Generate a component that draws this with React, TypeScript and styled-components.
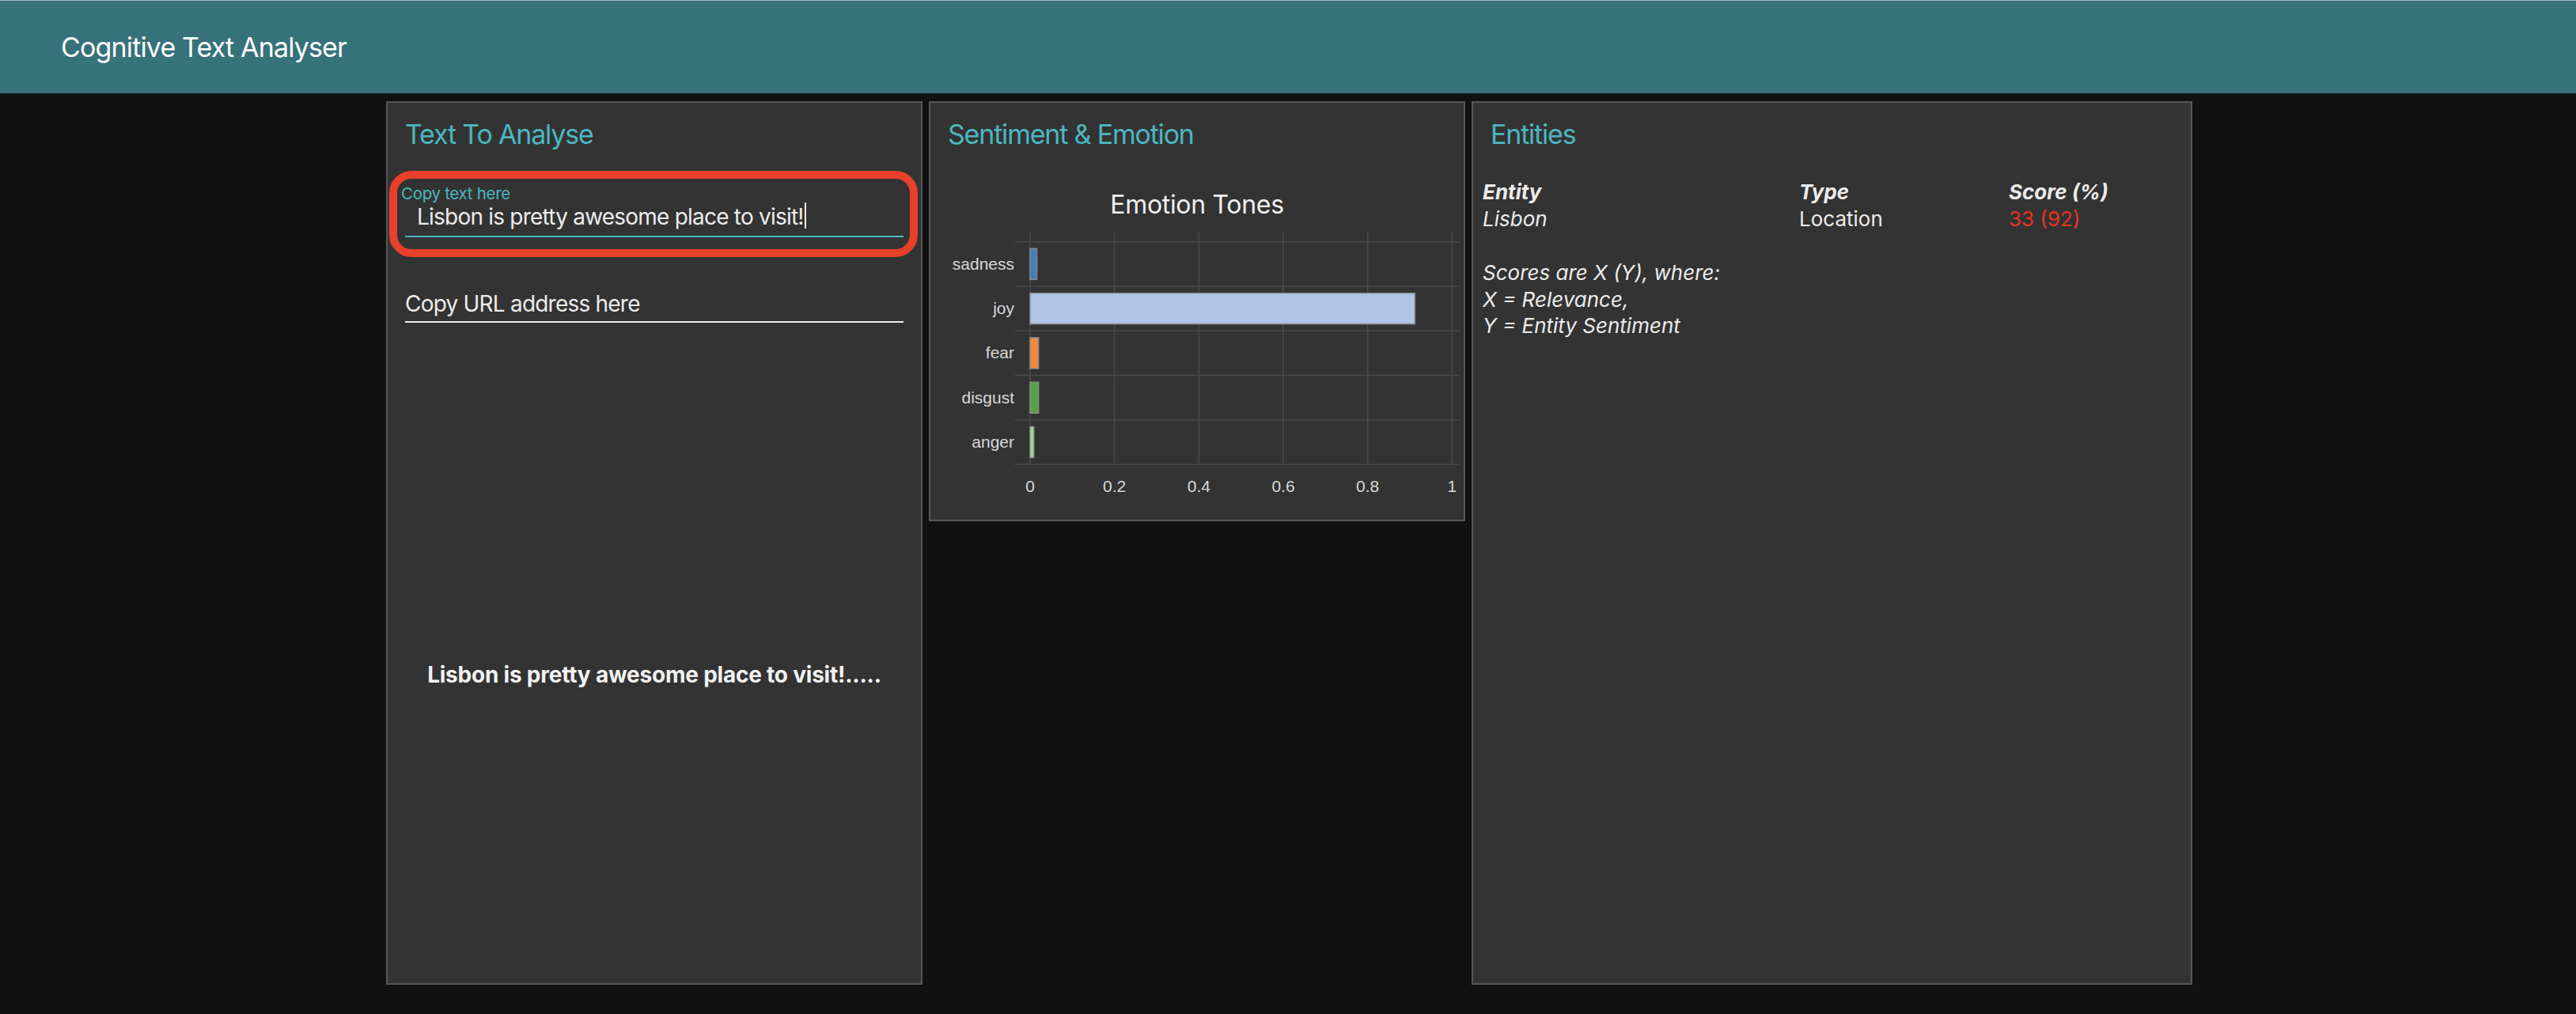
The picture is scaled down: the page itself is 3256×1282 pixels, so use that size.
import React from "react";
import styled, { createGlobalStyle } from "styled-components";

const GlobalStyle = createGlobalStyle`
  html, body {
    margin: 0;
    padding: 0;
    background: #111111;
  }
  body {
    font-family: Inter, "Noto Sans", "Liberation Sans", sans-serif;
    color: #e9e9e9;
  }
  * {
    box-sizing: border-box;
  }
`;

const TEAL = "#4cb7c0";

const Header = styled.header`
  height: 118px;
  background: #367279;
  border-top: 1px solid #a3b7c9;
  display: flex;
  align-items: center;
  padding-left: 77px;
`;

const AppTitle = styled.h1`
  margin: 0;
  font-size: 34px;
  line-height: 40px;
  font-weight: 400;
  color: #ffffff;
  letter-spacing: -0.025em;
`;

const Dashboard = styled.main`
  display: grid;
  grid-template-columns: 678px 678px 911px;
  column-gap: 8px;
  justify-content: center;
  align-items: start;
  padding: 10px 0 0 3px;
`;

const Panel = styled.section<{ $height: number }>`
  height: ${(p) => p.$height}px;
  background: #333333;
  border: 2px solid #575757;
  padding: 20px 22px;
  display: flex;
  flex-direction: column;
`;

const PanelTitle = styled.h2`
  margin: 0;
  font-size: 34px;
  line-height: 40px;
  font-weight: 400;
  color: ${TEAL};
  letter-spacing: -0.035em;
`;

const Field = styled.div<{ $gap: number }>`
  position: relative;
  margin-top: ${(p) => p.$gap}px;
`;

const FloatingLabel = styled.div`
  font-size: 20.5px;
  line-height: 22px;
  height: 22px;
  color: ${TEAL};
  margin-left: -5px;
  letter-spacing: -0.015em;
`;

const InputLine = styled.div<{ $focused?: boolean; $indent?: number; $padBottom: number }>`
  font-size: 28px;
  line-height: 32px;
  letter-spacing: -0.028em;
  color: #ececec;
  padding: 0 0 ${(p) => p.$padBottom}px ${(p) => p.$indent ?? 0}px;
  border-bottom: 2px solid ${(p) => (p.$focused ? TEAL : "#eeeeee")};
  white-space: nowrap;
`;

const Caret = styled.span`
  display: inline-block;
  width: 2px;
  height: 33px;
  margin-left: 1px;
  background: #e9e9e9;
  vertical-align: -5px;
`;

const Highlight = styled.div`
  position: absolute;
  top: -18px;
  left: -20px;
  right: -18px;
  bottom: -25px;
  border: 10px solid #e8402a;
  border-radius: 28px;
  pointer-events: none;
`;

const ResultText = styled.p`
  margin: 429px 0 0;
  text-align: center;
  font-size: 28px;
  line-height: 32px;
  font-weight: 700;
  letter-spacing: -0.008em;
  color: #f2f2f2;
`;

const ChartTitle = styled.h3`
  margin: 50px 0 0;
  text-align: center;
  font-size: 32px;
  line-height: 38px;
  font-weight: 400;
  color: #f0f0f0;
  letter-spacing: -0.01em;
`;

const ChartSvg = styled.svg`
  display: block;
  flex: none;
  margin-top: 12px;
  overflow: visible;
`;

const EntityTable = styled.div`
  display: grid;
  grid-template-columns: 400px 265px 1fr;
  margin: 36px 0 0 -10px;
  font-size: 26px;
  line-height: 34px;
`;

const Cell = styled.div<{ $bold?: boolean; $italic?: boolean; $color?: string }>`
  font-weight: ${(p) => (p.$bold ? 700 : 400)};
  font-style: ${(p) => (p.$italic ? "italic" : "normal")};
  color: ${(p) => p.$color ?? "#ececec"};
`;

const Note = styled.div`
  margin: 34px 0 0 -10px;
  font-size: 26px;
  line-height: 33.5px;
  font-style: italic;
  color: #ececec;
`;

const emotions = [
  { label: "sadness", value: 0.016, color: "#3d7fbf" },
  { label: "joy", value: 0.912, color: "#b0c6e6" },
  { label: "fear", value: 0.02, color: "#ee8a3a" },
  { label: "disgust", value: 0.02, color: "#55a346" },
  { label: "anger", value: 0.009, color: "#a5db8c" },
];

const ticks = [0, 0.2, 0.4, 0.6, 0.8, 1];

const X0 = 104;
const SCALE = 533.3;
const TOP = 15.7;
const BAND = 56.3;
const BAR_H = 39;
const GRID = "#4b4b4b";
const LABEL = "#d9d9d9";

function EmotionChart() {
  return (
    <ChartSvg width={650} height={340} viewBox="0 0 650 340">
      {ticks.map((t) => (
        <line
          key={`v${t}`}
          x1={X0 + t * SCALE}
          x2={X0 + t * SCALE}
          y1={4}
          y2={298}
          stroke={GRID}
          strokeWidth={1.5}
        />
      ))}
      {[0, 1, 2, 3, 4, 5].map((i) => (
        <line
          key={`h${i}`}
          x1={85}
          x2={646}
          y1={TOP + i * BAND}
          y2={TOP + i * BAND}
          stroke={GRID}
          strokeWidth={1.5}
        />
      ))}
      {emotions.map((e, i) => (
        <rect
          key={e.label}
          x={X0}
          y={TOP + i * BAND + (BAND - BAR_H) / 2}
          width={Math.max(e.value * SCALE, 3)}
          height={BAR_H}
          fill={e.color}
          stroke="#8a8a8a"
          strokeWidth={1.5}
        />
      ))}
      {emotions.map((e, i) => (
        <text
          key={`l${e.label}`}
          x={84}
          y={TOP + BAND * (i + 0.5) + 7}
          textAnchor="end"
          fontFamily='"Liberation Sans", Arial, sans-serif'
          fontSize={21}
          fill={LABEL}
        >
          {e.label}
        </text>
      ))}
      {ticks.map((t) => (
        <text
          key={`t${t}`}
          x={X0 + t * SCALE}
          y={331.7}
          textAnchor="middle"
          fontFamily='"Liberation Sans", Arial, sans-serif'
          fontSize={21}
          fill={LABEL}
        >
          {t}
        </text>
      ))}
    </ChartSvg>
  );
}

export default function App() {
  const text = "Lisbon is pretty awesome place to visit!";
  return (
    <>
      <GlobalStyle />
      <Header>
        <AppTitle>Cognitive Text Analyser</AppTitle>
      </Header>
      <Dashboard>
        <Panel $height={1117}>
          <PanelTitle>Text To Analyse</PanelTitle>
          <Field $gap={44}>
            <FloatingLabel>Copy text here</FloatingLabel>
            <InputLine $focused $indent={15} $padBottom={8}>
              {text}
              <Caret />
            </InputLine>
            <Highlight />
          </Field>
          <Field $gap={68}>
            <InputLine $padBottom={6}>Copy URL address here</InputLine>
          </Field>
          <ResultText>{text}.....</ResultText>
        </Panel>
        <Panel $height={531}>
          <PanelTitle>Sentiment &amp; Emotion</PanelTitle>
          <ChartTitle>Emotion Tones</ChartTitle>
          <EmotionChart />
        </Panel>
        <Panel $height={1117}>
          <PanelTitle>Entities</PanelTitle>
          <EntityTable>
            <Cell $bold $italic>Entity</Cell>
            <Cell $bold $italic>Type</Cell>
            <Cell $bold $italic>Score (%)</Cell>
            <Cell $italic>Lisbon</Cell>
            <Cell>Location</Cell>
            <Cell $color="#ea3323">33 (92)</Cell>
          </EntityTable>
          <Note>
            Scores are X (Y), where:
            <br />
            X = Relevance,
            <br />
            Y = Entity Sentiment
          </Note>
        </Panel>
      </Dashboard>
    </>
  );
}
